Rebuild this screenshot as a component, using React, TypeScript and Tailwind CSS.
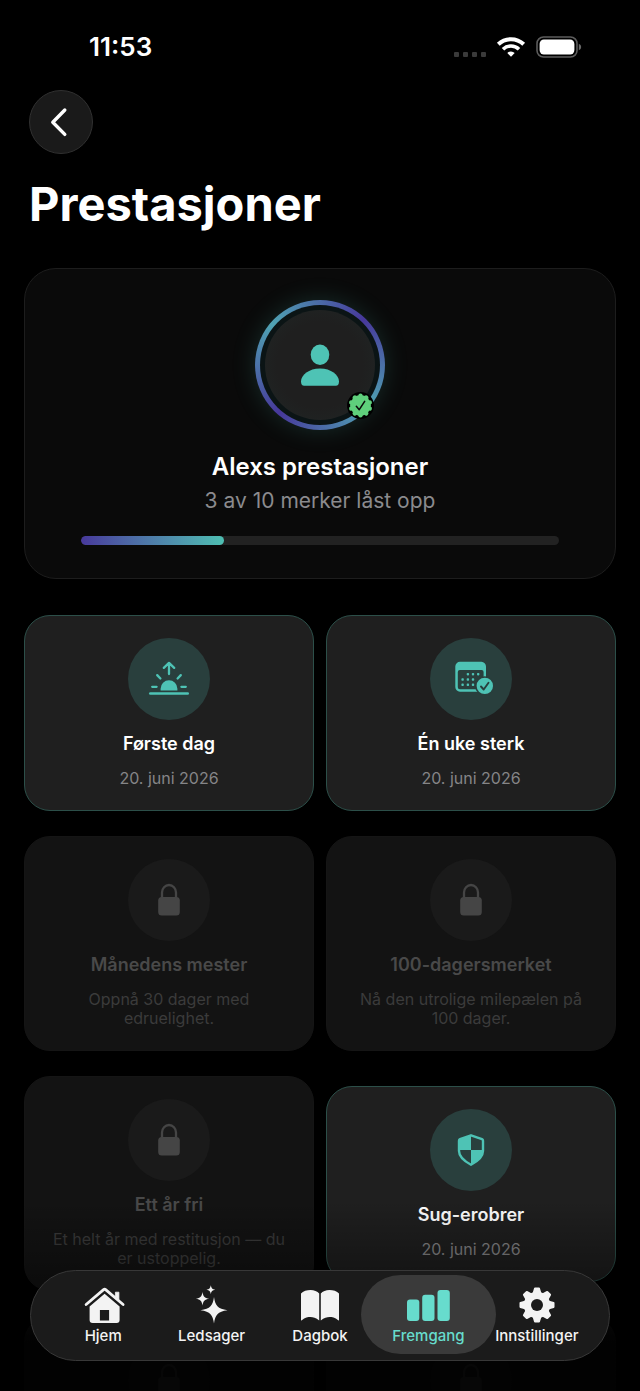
import type { ReactNode } from "react";

function SunriseIcon() {
  return (
    <svg width="42" height="36" viewBox="0 0 42 36" fill="none" stroke="currentColor" strokeWidth="2.3" strokeLinecap="round" strokeLinejoin="round" aria-hidden="true">
      <path d="M2.3 32.5H39.7" strokeWidth="2.6" />
      <path d="M12.6 29.6v-1.9a8.4 8.4 0 0 1 16.8 0v1.9z" fill="currentColor" stroke="none" />
      <path d="M21 13V2.300M15.800 6.900l5.200-5 5.200 5M4.200 25.800h4.400M33.400 25.800h4.400M9.200 14.100l3.200 3.400M32.800 14.100l-3.200 3.400" />
    </svg>
  );
}

function CalendarIcon() {
  const dots = [
    [13.9, 13.2], [19, 13.2], [24.2, 13.2],
    [8.6, 18.5], [13.9, 18.5], [19, 18.5],
    [8.6, 23.8], [13.9, 23.8], [19, 23.8],
  ];
  return (
    <svg width="48" height="36" viewBox="-7 0 48 36" aria-hidden="true">
      <path fillRule="evenodd" fill="currentColor" d="M6 0.800h21.400a4.800 4.800 0 0 1 4.600 4.800v20.500a4.600 4.600 0 0 1-4.400 4.600H6A4.600 4.600 0 0 1 1.300 26V5.500A4.700 4.700 0 0 1 6 0.800zM5.800 8.900a2 2 0 0 0-2 2v15.300a2 2 0 0 0 2 2h21.800a2 2 0 0 0 2-2V10.900a2 2 0 0 0-2-2z" />
      {dots.map(([x, y]) => (
        <rect key={`${x}-${y}`} x={x - 1.2} y={y - 1.2} width="2.4" height="2.4" rx="0.8" fill="currentColor" />
      ))}
      <circle cx="30.800" cy="24.900" r="9.700" fill="#293f3d" />
      <circle cx="30.800" cy="24.900" r="8.200" fill="currentColor" />
      <path d="M27 25.500l2.700 3 4.800-6.800" fill="none" stroke="#293f3d" strokeWidth="1.900" strokeLinecap="round" strokeLinejoin="round" />
    </svg>
  );
}

function ShieldIcon() {
  return (
    <svg width="28" height="34" viewBox="0 0 28 34" fill="none" aria-hidden="true">
      <path d="M14 2.300L25 6.200q1 .4 1 1.500V18c0 6.500-6.500 10.800-12 13.700C8.500 28.800 2 24.500 2 18V7.700q0-1.100 1-1.500z" stroke="currentColor" strokeWidth="2.400" strokeLinejoin="round" />
      <path d="M14 2.500V17H2V7zM14 17h12v1c0 6.500-6.500 10.800-12 13.700z" fill="currentColor" />
    </svg>
  );
}

function LockIcon() {
  return (
    <svg width="24" height="34" viewBox="0 0 24 34" fill="none" aria-hidden="true">
      <path d="M5 16V9.500a7 7.500 0 0 1 14 0V16" stroke="currentColor" strokeWidth="2.300" />
      <rect x="1.200" y="14" width="21.600" height="18.500" rx="3.500" fill="currentColor" />
    </svg>
  );
}

function HomeIcon() {
  return (
    <svg width="42" height="38" viewBox="-1 0 42 38" className="overflow-visible" aria-hidden="true">
      <g transform="translate(.6 0)">
        <path d="M2.500 18.500L20 3.600q1-.8 2 0L39.500 18.500" fill="none" stroke="currentColor" strokeWidth="2.800" strokeLinecap="round" strokeLinejoin="round" />
        <path d="M31.800 6.200h3.500v7.600l-3.500-3z" fill="currentColor" stroke="currentColor" strokeWidth="0.800" strokeLinejoin="round" />
        <path fillRule="evenodd" fill="currentColor" d="M21 7.800L36 20.600V34a3 3 0 0 1-3 3H9a3 3 0 0 1-3-3V20.600zM16.300 24v10.500h9.200V24z" />
      </g>
    </svg>
  );
}

function SparklesIcon() {
  return (
    <svg width="32" height="38" viewBox="0 0 32 38" fill="currentColor" className="overflow-visible" aria-hidden="true">
      <path d="M18 11C19.300 19.500 21.500 22.800 31.500 24.200 21.500 25.600 19.300 29 18 37.400 16.700 29 14.500 25.600 4.500 24.200 14.500 22.800 16.700 19.500 18 11z" />
      <path d="M6.500 6c.7 4.500 2 6 6.700 6.800-4.700.8-6 2.300-6.700 6.700-.7-4.400-2-5.900-6.700-6.700C4.500 12 5.800 10.500 6.500 6z" />
      <path d="M14.800-.8c.5 2.900 1.400 4 4.400 4.500-3 .5-3.900 1.500-4.400 4.300-.5-2.800-1.400-3.800-4.400-4.300 3-.5 3.900-1.600 4.400-4.500z" />
    </svg>
  );
}

function BookIcon() {
  return (
    <svg width="40" height="38" viewBox="0 0 40 38" fill="currentColor" aria-hidden="true">
      <path d="M1 7.500C3 5 7 4 10.500 4S17.500 5.300 19.200 7.500V34.500C16 31.500 13 31 10.500 31S5 31.500 1.800 34.200Q1 34.800 1 34z" />
      <path d="M39 7.500C37 5 33 4 29.500 4S22.500 5.300 20.800 7.500V34.500C24 31.500 27 31 29.500 31S35 31.500 38.200 34.200Q39 34.800 39 34z" />
    </svg>
  );
}

function BarsIcon() {
  return (
    <svg width="44" height="38" viewBox="0 0 44 38" fill="currentColor" aria-hidden="true">
      <rect x="1" y="13.500" width="12.300" height="21.500" rx="3" />
      <rect x="16.200" y="8.800" width="12.300" height="26.200" rx="3" />
      <rect x="31.500" y="4" width="12.300" height="31" rx="3" />
    </svg>
  );
}

function GearIcon() {
  return (
    <svg width="38" height="38" viewBox="0 0 38 38" aria-hidden="true">
      <g fill="currentColor" stroke="currentColor" strokeWidth="2" strokeLinejoin="round">
        {[0, 45, 90, 135].map((angle) => (
          <path key={angle} transform={`rotate(${angle} 19 19)`} d="M17 2.500h4L22.600 8v22L21 35.500h-4L15.400 30V8z" />
        ))}
        <circle cx="19" cy="19" r="12.200" />
      </g>
      <circle cx="19" cy="19" r="6" fill="#1b1b1b" />
    </svg>
  );
}

function StatusBar() {
  return (
    <div className="flex h-[90px] items-center justify-between pt-1 pr-[58px] pl-[89px]">
      <span className="text-[26px] leading-8 font-semibold">11:53</span>
      <div className="flex items-center gap-2.5">
        <div className="flex gap-1 pt-3.5">
          {[0, 1, 2, 3].map((n) => (
            <span key={n} className="size-[5px] rounded-[1px] bg-[#3a3a3a]" />
          ))}
        </div>
        <svg width="30" height="22" viewBox="0 0 30 22" fill="none" stroke="#fff" aria-hidden="true">
          <path d="M2.300 8.300a18.200 18.200 0 0 1 25.400 0" strokeWidth="4" />
          <path d="M7 13.200a11.500 11.500 0 0 1 16 0" strokeWidth="3.600" />
          <path d="M15 20.800l-3.700-3.900a5.300 5.300 0 0 1 7.400 0z" fill="#fff" stroke="none" />
        </svg>
        <svg width="46" height="22" viewBox="0 0 46 22" aria-hidden="true">
          <rect x="1" y="1" width="40" height="20" rx="6.500" fill="none" stroke="#5c5c5c" strokeWidth="1.600" />
          <rect x="3.600" y="3.600" width="34.800" height="14.800" rx="4.300" fill="#fff" />
          <path d="M42.800 7.700q2.400.8 2.400 3.300t-2.400 3.300z" fill="#6a6a6a" />
        </svg>
      </div>
    </div>
  );
}

function Avatar() {
  return (
    <div className="relative size-[130px] rounded-full bg-[conic-gradient(from_44deg,#47389b,#4fa3b3_24%,#47389b_49%,#4fa3b3_74%,#47389b)] p-[5px] shadow-[0_0_24px_rgba(78,196,180,0.18)]">
      <div className="flex size-full rounded-full bg-[#0b1415] p-[5px]">
        <div className="flex size-full items-center justify-center rounded-full bg-[radial-gradient(circle,#1f1f1f_55%,#202726)] text-[#4ec3b5]">
          <svg width="40" height="42" viewBox="0 0 40 42" fill="currentColor" aria-hidden="true">
            <ellipse cx="20" cy="10.800" rx="9.300" ry="10.200" />
            <path d="M1 37.500C1 31 9 24.500 20 24.500S39 31 39 37.500Q39 41.700 35.800 41.700H4.200Q1 41.700 1 37.500z" />
          </svg>
        </div>
      </div>
      <span className="absolute right-[11px] bottom-[11px]">
        <svg width="27" height="27" viewBox="0 0 26 26" aria-hidden="true">
          <circle cx="13" cy="13" r="13" fill="#000" />
          <g fill="#5fd07c">
            <circle cx="13" cy="13" r="10" />
            {[0, 36, 72, 108, 144, 180, 216, 252, 288, 324].map((angle) => (
              <circle key={angle} cx="13" cy="3.600" r="2.100" transform={`rotate(${angle} 13 13)`} />
            ))}
          </g>
          <path d="M9 13.700l2.800 3.300 5.200-8" fill="none" stroke="#0b0b0b" strokeWidth="1.500" strokeLinecap="round" strokeLinejoin="round" />
        </svg>
      </span>
    </div>
  );
}

function Summary({ unlocked, total }: { unlocked: number; total: number }) {
  return (
    <section className="flex flex-col items-center rounded-[32px] border border-[#1d1d1d] bg-[#0a0a0a] px-14 pt-[31px] pb-[33px]">
      <Avatar />
      <h2 className="mt-[21px] text-2xl leading-8 font-semibold">Alexs prestasjoner</h2>
      <p className="mt-0.5 text-[21px] leading-8 text-[#8b8b8e]">
        {unlocked} av {total} merker låst opp
      </p>
      <div className="mt-[19px] h-[9px] w-full overflow-hidden rounded-full bg-[#222]" role="progressbar" aria-valuenow={unlocked} aria-valuemax={total}>
        <div className="h-full rounded-full bg-linear-to-r from-[#47389b] to-[#4ebfb2]" style={{ width: `${(unlocked / total) * 100}%` }} />
      </div>
    </section>
  );
}

type Badge = { id: number; title?: string; text?: string; icon?: ReactNode };

const badges: Badge[] = [
  { id: 1, title: "Første dag", text: "20. juni 2026", icon: <SunriseIcon /> },
  { id: 2, title: "Én uke sterk", text: "20. juni 2026", icon: <CalendarIcon /> },
  { id: 3, title: "Månedens mester", text: "Oppnå 30 dager med edruelighet." },
  { id: 4, title: "100-dagersmerket", text: "Nå den utrolige milepælen på 100 dager." },
  { id: 5, title: "Ett år fri", text: "Et helt år med restitusjon — du er ustoppelig." },
  { id: 6, title: "Sug-erobrer", text: "20. juni 2026", icon: <ShieldIcon /> },
  { id: 7 },
  { id: 8 },
];

function BadgeCard({ title, text, icon }: Badge) {
  const card = icon ? "border-[#2c4f49] bg-[#1f1f1f]" : "border-[#151515] bg-[#131313]";
  const circle = icon ? "bg-[#293f3d] text-[#4ec3b5]" : "bg-[#1a1a1a] text-[#454545]";
  return (
    <li className={`flex flex-col items-center rounded-[26px] border px-[22px] py-[22px] text-center ${card}`}>
      <div className={`flex size-[82px] items-center justify-center rounded-full ${circle}`}>{icon ?? <LockIcon />}</div>
      {title && <h3 className={`mt-[13px] text-lg leading-[22px] font-semibold ${icon ? "text-white" : "text-[#494949]"}`}>{title}</h3>}
      {text && <p className={`mt-3.5 text-base leading-[19px] ${icon ? "text-[#858587]" : "text-[#3b3b3b]"}`}>{text}</p>}
    </li>
  );
}

const tabs = [
  { label: "Hjem", icon: <HomeIcon /> },
  { label: "Ledsager", icon: <SparklesIcon /> },
  { label: "Dagbok", icon: <BookIcon /> },
  { label: "Fremgang", icon: <BarsIcon />, active: true },
  { label: "Innstillinger", icon: <GearIcon /> },
];

function TabBar() {
  return (
    <nav className="absolute inset-x-[30px] bottom-[30px] flex h-[91px] rounded-full border border-[#383838] bg-[#1b1b1b] py-1 px-[18px]">
      {tabs.map((tab) => (
        <a
          key={tab.label}
          href="#"
          aria-current={tab.active ? "page" : undefined}
          className={`relative flex flex-1 flex-col items-center gap-0.5 pt-[11px] ${tab.active ? "text-[#67dccd]" : "text-[#f3f3f3]"}`}
        >
          {tab.active && <span className="absolute -inset-x-[13px] top-0 bottom-0.5 rounded-full bg-[#3a3a3a]" />}
          <span className="relative">{tab.icon}</span>
          <span className="relative text-[15px] leading-5 font-medium">{tab.label}</span>
        </a>
      ))}
    </nav>
  );
}

export default function App() {
  return (
    <div className="relative h-screen overflow-hidden bg-black font-['Inter','Liberation_Sans',sans-serif] text-white">
      <StatusBar />
      <header className="px-[29px]">
        <button type="button" aria-label="Tilbake" className="flex size-16 items-center justify-center rounded-full border border-[#303030] bg-[#1a1a1a]">
          <svg width="24" height="30" viewBox="0 0 24 30" fill="none" stroke="#fff" strokeWidth="3.400" strokeLinecap="round" strokeLinejoin="round" aria-hidden="true">
            <path d="M15.800 3L3.800 15.200l12 12.200" />
          </svg>
        </button>
        <h1 className="mt-5 text-[47px] leading-[60px] font-bold">Prestasjoner</h1>
      </header>
      <main className="px-6 pt-[34px]">
        <Summary unlocked={3} total={10} />
        <ul className="mt-9 grid grid-cols-2 items-center gap-x-3 gap-y-[25px]">
          {badges.map((badge) => (
            <BadgeCard key={badge.id} {...badge} />
          ))}
        </ul>
      </main>
      <div className="pointer-events-none absolute inset-x-0 bottom-0 h-[190px] bg-linear-to-b from-transparent via-black/40 via-45% to-black/90 to-75%" />
      <TabBar />
    </div>
  );
}
